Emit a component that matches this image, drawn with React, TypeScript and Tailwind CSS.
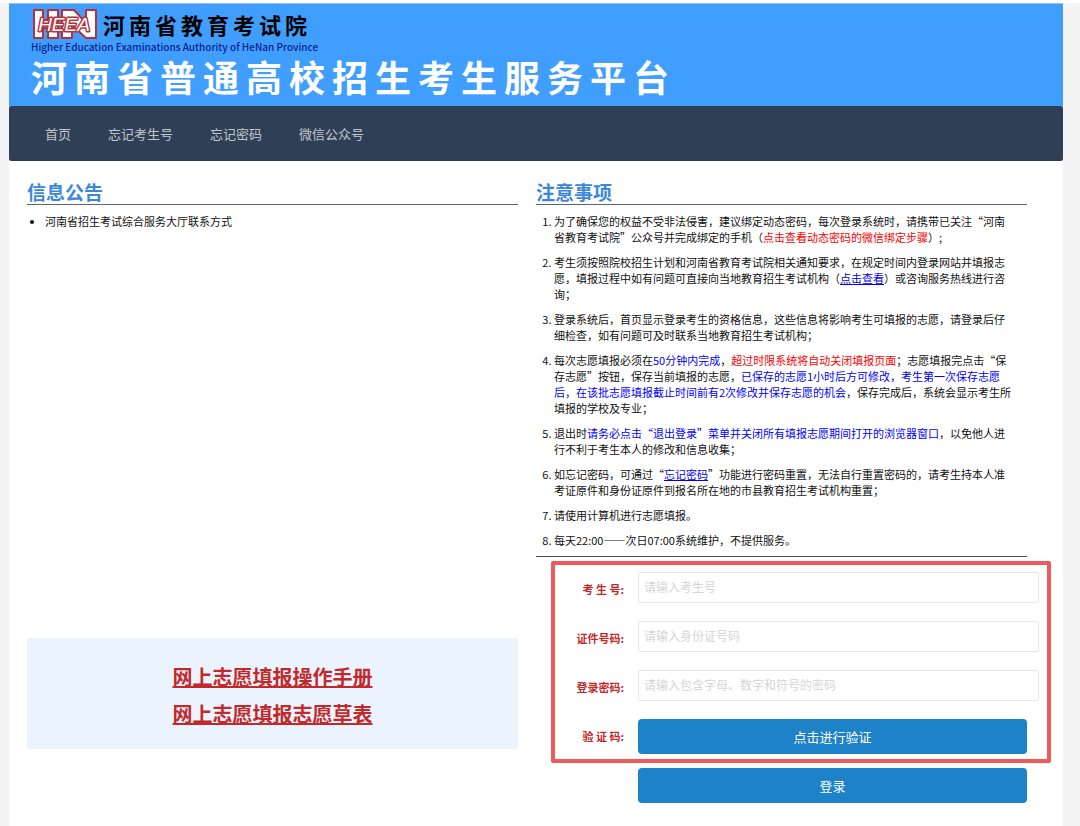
import type { ReactNode } from "react";

const NAV_ITEMS = ["首页", "忘记考生号", "忘记密码", "微信公众号"];

const FIELDS = [
  { id: "examinee", label: "考 生 号:", placeholder: "请输入考生号", type: "text" },
  { id: "idcard", label: "证件号码:", placeholder: "请输入身份证号码", type: "text" },
  { id: "password", label: "登录密码:", placeholder: "请输入包含字母、数字和符号的密码", type: "password" },
];

function Logo() {
  return (
    <svg width="68" height="32" viewBox="0 0 68 32" role="img" aria-label="HEEA">
      {/* two chunky blocks behind the lettering */}
      <g fill="#fff" stroke="#b3323c" strokeWidth="2" strokeLinejoin="round">
        <path d="M3 2h9v10h5V2h10v28H17V20h-5v10H3z" />
        <path d="M31 2h12l12 13V2h10v28H55L41 17v13H31z" />
      </g>
      <text
        x="33"
        y="23"
        textAnchor="middle"
        fontSize="19"
        fontWeight="400"
        fontStyle="italic"
        fontFamily="Liberation Sans, sans-serif"
        fill="#fff"
        stroke="#b3323c"
        strokeWidth="3"
        strokeLinejoin="round"
        paintOrder="stroke"
      >
        HEEA
      </text>
    </svg>
  );
}

function Header() {
  return (
    <header className="border-t border-[#8fc3f8] bg-[#409eff] pt-1 pr-6 pb-2 pl-[22px]">
      <div className="flex items-center gap-1">
        <Logo />
        <p className="text-[22px] leading-8 font-bold tracking-[4px] text-black">河南省教育考试院</p>
      </div>
      <p className="text-[10px] leading-[14px] font-medium text-[#0b1f8f]">
        Higher Education Examinations Authority of HeNan Province
      </p>
      <h1 className="text-4xl leading-[44px] font-bold tracking-[7px] text-white">
        河南省普通高校招生考生服务平台
      </h1>
    </header>
  );
}

function Nav() {
  return (
    <nav className="flex h-[55px] items-center gap-[37px] rounded-xs bg-[#2f4056] px-9 text-[13px] text-[#c1c6cd]">
      {NAV_ITEMS.map((item) => (
        <a key={item} href="#">
          {item}
        </a>
      ))}
    </nav>
  );
}

function SectionTitle({ children }: { children: ReactNode }) {
  return (
    <h2 className="border-b border-[#5f6468] text-[19px] leading-6 font-bold text-[#3b87db]">{children}</h2>
  );
}

function Red({ children }: { children: ReactNode }) {
  return <span className="text-[#ff0000]">{children}</span>;
}

function Blue({ children }: { children: ReactNode }) {
  return <span className="text-[#0000ff]">{children}</span>;
}

function TextLink({ children }: { children: ReactNode }) {
  return (
    <a href="#" className="text-[#0000ee] underline">
      {children}
    </a>
  );
}

function Notices() {
  return (
    <ol className="flex list-decimal flex-col gap-[9px] border-b border-[#4b4b4b] pt-2 pr-3 pb-2 pl-[18px] text-[11px] leading-4 text-[#111]">
      <li>
        为了确保您的权益不受非法侵害，建议绑定动态密码，每次登录系统时，请携带已关注“河南省教育考试院”公众号并完成绑定的手机（
        <a href="#" className="text-[#ff0000]">
          点击查看动态密码的微信绑定步骤
        </a>
        ）;
      </li>
      <li>
        考生须按照院校招生计划和河南省教育考试院相关通知要求，在规定时间内登录网站并填报志愿，填报过程中如有问题可直接向当地教育招生考试机构（
        <TextLink>点击查看</TextLink>
        ）或咨询服务热线进行咨询；
      </li>
      <li>
        登录系统后，首页显示登录考生的资格信息，这些信息将影响考生可填报的志愿，请登录后仔细检查，如有问题可及时联系当地教育招生考试机构；
      </li>
      <li>
        每次志愿填报必须在<Blue>50分钟内完成</Blue>，<Red>超过时限系统将自动关闭填报页面</Red>
        ；志愿填报完点击“保存志愿”按钮，保存当前填报的志愿，
        <Blue>
          已保存的志愿1小时后方可修改，考生第一次保存志愿后，在该批志愿填报截止时间前有2次修改并保存志愿的机会
        </Blue>
        ，保存完成后，系统会显示考生所填报的学校及专业；
      </li>
      <li>
        退出时<Blue>请务必点击“退出登录”菜单并关闭所有填报志愿期间打开的浏览器窗口</Blue>
        ，以免他人进行不利于考生本人的修改和信息收集；
      </li>
      <li>
        如忘记密码，可通过“<TextLink>忘记密码</TextLink>
        ”功能进行密码重置，无法自行重置密码的，请考生持本人准考证原件和身份证原件到报名所在地的市县教育招生考试机构重置；
      </li>
      <li>请使用计算机进行志愿填报。</li>
      <li>每天22:00——次日07:00系统维护，不提供服务。</li>
    </ol>
  );
}

function LoginForm() {
  return (
    <form className="relative flex flex-col pt-[15px]" onSubmit={(e) => e.preventDefault()}>
      {/* highlight frame round the fields to fill in */}
      <div className="pointer-events-none absolute top-1 -right-6 bottom-10 left-[15px] rounded-xs border-4 border-[#ee5a5a]" />
      {FIELDS.map((f) => (
        <div key={f.id} className="-mr-3 mb-[18px] flex items-center gap-3.5">
          <label htmlFor={f.id} className="w-[88px] shrink-0 pt-1 text-right text-[11px] font-bold text-[#c22a2a]">
            {f.label}
          </label>
          <input
            id={f.id}
            type={f.type}
            placeholder={f.placeholder}
            className="h-[31px] min-w-0 flex-1 rounded-xs border border-[#e6e6e6] px-[5px] pb-0.5 text-xs placeholder:text-[#d5d5d5]"
          />
        </div>
      ))}
      <div className="mb-3.5 flex items-center gap-3.5">
        <label htmlFor="verify" className="w-[88px] shrink-0 text-right text-[11px] font-bold text-[#c22a2a]">
          验 证 码:
        </label>
        <button id="verify" type="button" className="h-[35px] flex-1 rounded bg-[#1e82c8] text-[13px] text-white">
          点击进行验证
        </button>
      </div>
      <button type="submit" className="ml-[102px] h-[35px] rounded bg-[#1e82c8] text-[13px] text-white">
        登录
      </button>
    </form>
  );
}

export default function App() {
  return (
    <div
      lang="zh-CN"
      className="flex min-h-screen flex-col bg-[#f4f4f4] font-['Noto_Sans_CJK_SC',sans-serif]"
    >
      <div className="h-[3px] bg-white" />
      <div className="mr-[17px] ml-[9px] flex-1 bg-white">
        <Header />
        <Nav />
        <main className="flex gap-[18px] pt-[19px] pr-9 pb-[23px] pl-[18px]">
          <section className="min-w-0 flex-1">
            <SectionTitle>信息公告</SectionTitle>
            <ul className="min-h-[433px] list-disc pt-2 pl-[18px] text-[11px] leading-4 text-[#111]">
              <li>
                <a href="#">河南省招生考试综合服务大厅联系方式</a>
              </li>
            </ul>
            <div className="flex flex-col items-center gap-2 rounded-xs bg-[#ebf3ff] pt-6 pb-[21px] text-xl leading-[29px] font-bold text-[#c22a2a]">
              <a href="#" className="underline">
                网上志愿填报操作手册
              </a>
              <a href="#" className="underline">
                网上志愿填报志愿草表
              </a>
            </div>
          </section>
          <section className="min-w-0 flex-1">
            <SectionTitle>注意事项</SectionTitle>
            <Notices />
            <LoginForm />
          </section>
        </main>
      </div>
    </div>
  );
}
